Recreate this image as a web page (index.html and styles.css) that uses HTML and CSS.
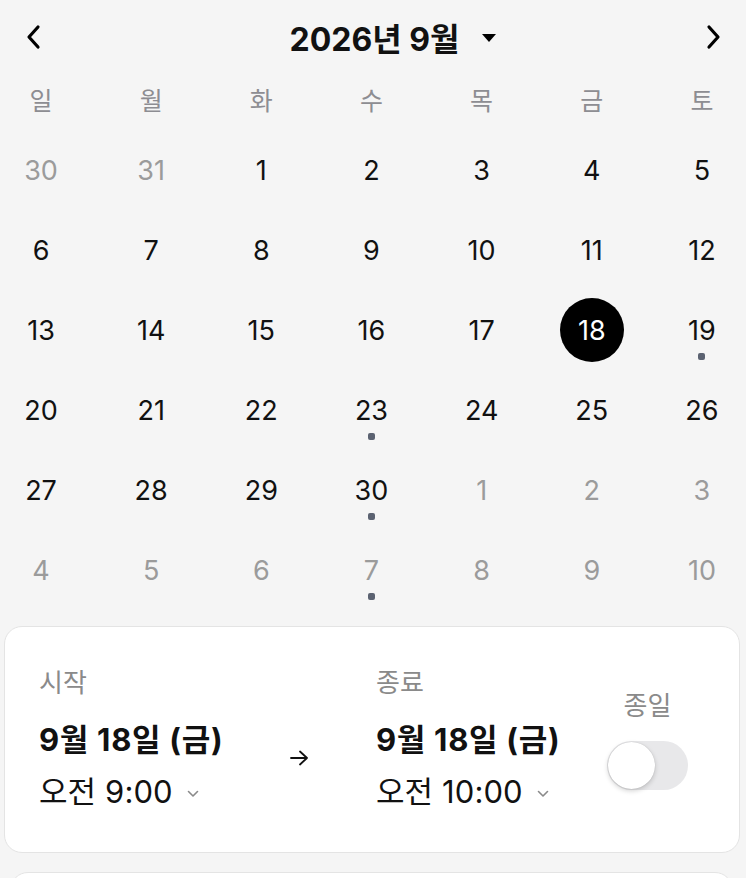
FILE: index.html
```html
<!DOCTYPE html>
<html lang="ko">
<head>
    <meta charset="utf-8">
    <title>일정 추가</title>
    <link rel="stylesheet" href="styles.css">
</head>
<body>
    <header class="cal-header">
        <button class="nav-btn" aria-label="이전 달">
            <svg width="18" height="26" viewBox="0 0 18 26"><path d="M13 3 L4 13 L13 23" fill="none" stroke="#000" stroke-width="3.2" stroke-linecap="round" stroke-linejoin="round"/></svg>
        </button>
        <div class="month-title">
            <span>2026년 9월</span>
            <svg class="caret" width="16" height="10" viewBox="0 0 16 10"><path d="M1 1 H15 L8 9 Z" fill="#000"/></svg>
        </div>
        <button class="nav-btn" aria-label="다음 달">
            <svg width="18" height="26" viewBox="0 0 18 26"><path d="M5 3 L14 13 L5 23" fill="none" stroke="#000" stroke-width="3.2" stroke-linecap="round" stroke-linejoin="round"/></svg>
        </button>
    </header>

    <div class="weekdays">
        <span>일</span><span>월</span><span>화</span><span>수</span><span>목</span><span>금</span><span>토</span>
    </div>

    <div class="days" id="days"></div>

    <section class="card time-card">
        <div class="col col-start">
            <div class="label">시작</div>
            <div class="date">9월 18일 (금)</div>
            <div class="time">오전 9:00
                <svg class="chev" width="12" height="8" viewBox="0 0 12 8"><path d="M1.5 1.5 L6 6 L10.5 1.5" fill="none" stroke="#8a8a8a" stroke-width="1.6" stroke-linecap="round" stroke-linejoin="round"/></svg>
            </div>
        </div>
        <div class="col col-arrow">
            <svg width="20" height="16" viewBox="0 0 20 16"><path d="M2 8 H18 M11 1.5 L18 8 L11 14.5" fill="none" stroke="#111" stroke-width="1.8" stroke-linecap="round" stroke-linejoin="round"/></svg>
        </div>
        <div class="col col-end">
            <div class="label">종료</div>
            <div class="date">9월 18일 (금)</div>
            <div class="time">오전 10:00
                <svg class="chev" width="12" height="8" viewBox="0 0 12 8"><path d="M1.5 1.5 L6 6 L10.5 1.5" fill="none" stroke="#8a8a8a" stroke-width="1.6" stroke-linecap="round" stroke-linejoin="round"/></svg>
            </div>
        </div>
        <div class="col col-allday">
            <div class="label">종일</div>
            <div class="toggle"><span class="knob"></span></div>
        </div>
    </section>

    <section class="card next-card"></section>

    <script>
        // 2026년 9월 달력 (일요일 시작, 6주). 두 번째 값이 1이면 이전/다음 달
        const days = [
            [30, 1], [31, 1], [1], [2], [3], [4], [5],
            [6], [7], [8], [9], [10], [11], [12],
            [13], [14], [15], [16], [17], [18], [19],
            [20], [21], [22], [23], [24], [25], [26],
            [27], [28], [29], [30], [1, 1], [2, 1], [3, 1],
            [4, 1], [5, 1], [6, 1], [7, 1, 1], [8, 1], [9, 1], [10, 1]
        ];
        const selected = 18;
        const hasEvent = [19, 23, 30];
        const grid = document.getElementById('days');

        days.forEach(([num, other, event]) => {
            const cell = document.createElement('div');
            cell.className = 'day';
            const n = document.createElement('span');
            n.className = 'num';
            n.textContent = num;
            if (other) cell.classList.add('other');
            if (!other && num === selected) cell.classList.add('selected');
            cell.appendChild(n);
            if (event || (!other && hasEvent.includes(num))) {
                const dot = document.createElement('span');
                dot.className = 'dot';
                cell.appendChild(dot);
            }
            grid.appendChild(cell);
        });
    </script>
</body>
</html>
```

FILE: styles.css
```css
body {
    margin: 0;
    background-color: #f5f5f5;
    font-family: Inter, "Noto Sans CJK KR", sans-serif;
    color: #111;
}

.cal-header {
    height: 74px;
    display: flex;
    align-items: center;
    justify-content: space-between;
    padding: 0 23px 0 24px;
}

.nav-btn {
    background: none;
    border: none;
    padding: 0;
    width: 20px;
    height: 30px;
    display: flex;
    align-items: center;
    justify-content: center;
    cursor: pointer;
}

.month-title {
    display: flex;
    align-items: center;
    gap: 22px;
    font-size: 32px;
    font-weight: 700;
    margin-left: 40px;
}

.caret {
    margin-top: 2px;
}

/* 요일 + 날짜는 같은 7칸 배치 */
.weekdays,
.days {
    display: grid;
    grid-template-columns: repeat(7, 64px);
    justify-content: space-between;
    padding: 0 12px 0 9px;
}

.weekdays {
    height: 50px;
    align-items: center;
}

.weekdays span {
    text-align: center;
    font-size: 25px;
    color: #8d8d92;
}

.days {
    margin-top: 6px;
    grid-auto-rows: 80px;
}

.day {
    position: relative;
    display: flex;
    align-items: center;
    justify-content: center;
}

.day .num {
    width: 64px;
    height: 64px;
    border-radius: 50%;
    display: flex;
    align-items: center;
    justify-content: center;
    font-size: 27px;
}

.day.other .num {
    color: #9b9b9b;
}

.day.selected .num {
    background-color: #000;
    color: #fff;
}

.dot {
    position: absolute;
    left: 50%;
    top: 63px;
    width: 7px;
    height: 7px;
    margin-left: -3.5px;
    border-radius: 2px;
    background-color: #5b6271;
}

.card {
    background-color: #fff;
    border: 1px solid #e4e4e4;
    border-radius: 18px;
    box-sizing: border-box;
}

.time-card {
    margin: 16px 6px 0 4px;
    height: 227px;
    display: flex;
    align-items: flex-start;
    padding: 39px 0 0 34px;
}

.label {
    font-size: 26px;
    line-height: 34px;
    color: #8a8a8a;
}

.date {
    margin-top: 20px;
    font-size: 31px;
    line-height: 40px;
    font-weight: 700;
    letter-spacing: 0.7px;
    white-space: nowrap;
}

.time {
    margin-top: 12px;
    font-size: 31px;
    line-height: 40px;
    letter-spacing: 0.1px;
    display: flex;
    align-items: center;
    white-space: nowrap;
}

.chev {
    margin-left: 14px;
    margin-top: 4px;
}

.col-start {
    width: 250px;
}

.col-arrow {
    width: 22px;
    margin-top: 84px;
    margin-right: 65px;
}

.col-end {
    width: 231px;
}

.col-allday {
    width: 81px;
    display: flex;
    flex-direction: column;
    align-items: center;
    margin-top: 23px;
}

.toggle {
    margin-top: 18px;
    width: 81px;
    height: 49px;
    border-radius: 25px;
    background-color: #e8e8ea;
    position: relative;
}

.knob {
    position: absolute;
    left: 1px;
    top: 1px;
    width: 47px;
    height: 47px;
    border-radius: 50%;
    background-color: #fff;
    box-shadow: 0 2px 5px rgba(0, 0, 0, 0.18), 0 0 1px rgba(0, 0, 0, 0.2);
}

.next-card {
    margin: 19px 13px 0 10px;
    height: 80px;
}
```
